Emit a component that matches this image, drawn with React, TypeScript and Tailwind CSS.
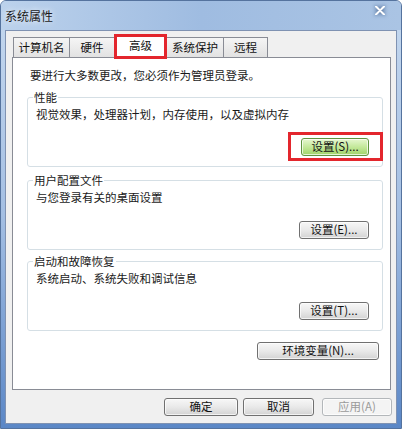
import React from 'react';

type BtnProps = {
  label: string;
  w: string;
  kind?: 'normal' | 'hover' | 'disabled';
};

const WinButton: React.FC<BtnProps> = ({ label, w, kind = 'normal' }) => {
  let look =
    'border-[#707070] bg-gradient-to-b from-[#f7f7f7] via-[#e9e9e9] to-[#d3d3d3] text-[#111]';
  if (kind === 'hover') {
    look = 'border-[#5f9440] bg-gradient-to-b from-[#e6f7cf] via-[#c3e89a] to-[#9fd468] text-[#111]';
  }
  if (kind === 'disabled') {
    look = 'border-[#b3b7ba] bg-[#f4f4f4] text-[#9a9a9a]';
  }
  return (
    <div
      className={`${w} h-[18px] flex items-center justify-center rounded-[3px] border text-[11.5px] leading-none shadow-[inset_0_0_0_1px_rgba(255,255,255,0.7)] ${look}`}
    >
      {label}
    </div>
  );
};

type GroupProps = {
  title: string;
  text: string;
  button: React.ReactNode;
  className: string;
};

const GroupBox: React.FC<GroupProps> = ({ title, text, button, className }) => (
  <fieldset className={`border border-[#d5dfe5] rounded-[3px] px-[8px] pb-[10px] ${className}`}>
    <legend className="-ml-[3px] px-[1px] text-[11.5px] leading-[14px] text-[#1a1a1a]">{title}</legend>
    <p className="mt-[3px] text-[11.5px] leading-[14px] text-[#1a1a1a]">{text}</p>
    <div className="mt-[17px] flex justify-end pr-[5px]">{button}</div>
  </fieldset>
);

const tabs = [
  { name: '计算机名', w: 'w-[57px]' },
  { name: '硬件', w: 'w-[46px]' },
  { name: '高级', w: 'w-[53px]', active: true },
  { name: '系统保护', w: 'w-[58px]' },
  { name: '远程', w: 'w-[45px]' },
];

export default function App() {
  return (
    <div className="w-[402px] h-[429px] overflow-hidden flex flex-col border border-[#55739e] rounded-t-[6px] bg-gradient-to-b from-[#c6d9ef] via-[#a4bfe3] to-[#5b87c6] font-['Noto_Sans_CJK_SC','Noto_Sans',sans-serif]">
      {/* title bar */}
      <div className="h-[29px] shrink-0 flex items-center justify-between pl-[4px] pr-[16px] bg-gradient-to-r from-[#bcd2ec] via-[#9fbce1] to-[#aac4e4]">
        <span className="text-[12px] leading-none text-[#1b1b1b] [text-shadow:0_0_6px_#ffffff]">系统属性</span>
        <svg width="10" height="9" viewBox="0 0 10 9" className="-mt-[10px] drop-shadow-[0_0_2px_#2b4a78]">
          <path d="M1 0.5 L9 8.5 M9 0.5 L1 8.5" stroke="#ffffff" strokeWidth="2" strokeLinecap="round" />
        </svg>
      </div>

      {/* dialog body */}
      <div className="mx-[4px] h-[394px] shrink-0 border border-[#7f92b2] bg-[#f0f0f0] flex flex-col">
        {/* tabs */}
        <div className="flex items-end pl-[7px] pt-[4px] relative z-10">
          {tabs.map((t) =>
            t.active ? (
              <div
                key={t.name}
                className={`${t.w} h-[23px] -mb-px -ml-px relative flex items-center justify-center bg-white border border-b-0 border-[#898c95] text-[11.5px] text-[#111]`}
              >
                <span className="-mt-[3px]">{t.name}</span>
                <span className="absolute -left-[1px] -right-[1px] -top-[2px] -bottom-[1px] border-[3px] border-[#e3262d]" />
              </div>
            ) : (
              <div
                key={t.name}
                className={`${t.w} h-[20px] flex items-center justify-center bg-gradient-to-b from-[#f5f5f5] to-[#e2e2e2] border border-b-0 border-[#898c95] -ml-px first:ml-0 text-[11.5px] text-[#111]`}
              >
                {t.name}
              </div>
            )
          )}
        </div>

        {/* tab page */}
        <div className="ml-[6px] w-[379px] h-[333px] border border-[#898c95] bg-white">
          <p className="pl-[17px] pt-[10px] text-[11.5px] leading-[14px] text-[#1a1a1a]">
            要进行大多数更改，您必须作为管理员登录。
          </p>
          <div className="ml-[14px] mr-[7px]">
            <GroupBox
              className="mt-[8px]"
              title="性能"
              text="视觉效果，处理器计划，内存使用，以及虚拟内存"
              button={
                <div className="relative">
                  <WinButton label="设置(S)..." w="w-[68px]" kind="hover" />
                  <span className="absolute -left-[13px] -right-[14px] -top-[6px] -bottom-[5px] border-[3px] border-[#e3262d]" />
                </div>
              }
            />
            <GroupBox
              className="mt-[6px]"
              title="用户配置文件"
              text="与您登录有关的桌面设置"
              button={<WinButton label="设置(E)..." w="w-[70px]" />}
            />
            <GroupBox
              className="mt-[4px]"
              title="启动和故障恢复"
              text="系统启动、系统失败和调试信息"
              button={<WinButton label="设置(T)..." w="w-[70px]" />}
            />
            <div className="mt-[11px] flex justify-end pr-[4px]">
              <WinButton label="环境变量(N)..." w="w-[122px]" />
            </div>
          </div>
        </div>

        {/* dialog buttons */}
        <div className="mt-[8px] flex justify-end pr-[4px]">
          <WinButton label="确定" w="w-[74px]" />
          <div className="ml-[5px]">
            <WinButton label="取消" w="w-[71px]" />
          </div>
          <div className="ml-[8px]">
            <WinButton label="应用(A)" w="w-[70px]" kind="disabled" />
          </div>
        </div>
      </div>
    </div>
  );
}
